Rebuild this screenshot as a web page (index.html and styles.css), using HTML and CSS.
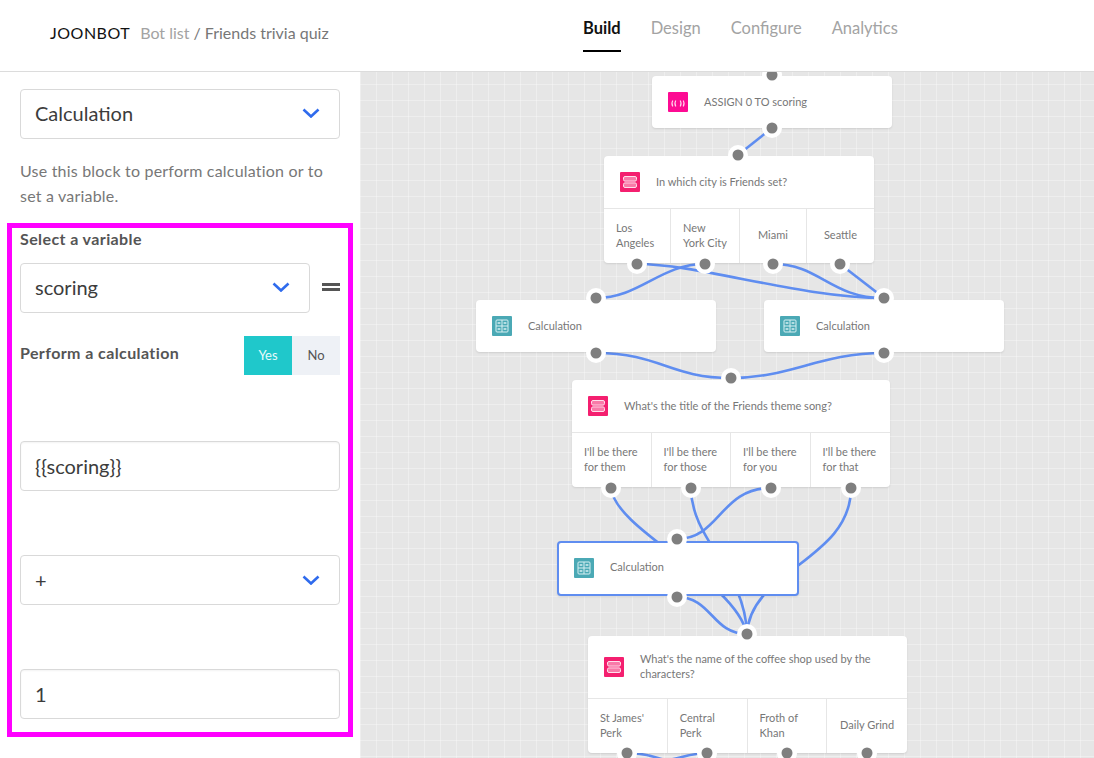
FILE: index.html
```html
<!DOCTYPE html>
<html>
  <head>
    <title>Friends trivia quiz</title>
    <link rel="stylesheet" href="styles.css">
  </head>

  <body>
    <svg class="defs" width="0" height="0">
      <symbol id="chevron" viewBox="0 0 18 10">
        <path d="M1.5 1.5 L9 8.5 L16.5 1.5" fill="none" stroke="#2f6bed" stroke-width="2.6"/>
      </symbol>
      <symbol id="icon-assign" viewBox="0 0 20 20">
        <rect width="20" height="20" rx="1" fill="#fd0b93"/>
        <path d="M4.8 8.5 Q3 11.5 4.8 14.5 M7.8 8.5 Q6 11.5 7.8 14.5 M12.2 8.5 Q14 11.5 12.2 14.5 M15.2 8.5 Q17 11.5 15.2 14.5" fill="none" stroke="#ffd4ec" stroke-width="1.1"/>
      </symbol>
      <symbol id="icon-question" viewBox="0 0 20 20">
        <rect width="20" height="20" rx="1" fill="#f41f6f"/>
        <rect x="3.5" y="4.5" width="13" height="4.6" rx="1.5" fill="#f87aa8" stroke="#ffe0ec"/>
        <rect x="3.5" y="10.9" width="13" height="4.6" rx="1.5" fill="#f87aa8" stroke="#ffe0ec"/>
      </symbol>
      <symbol id="icon-calc" viewBox="0 0 20 20">
        <rect width="20" height="20" rx="1" fill="#4ba9b5"/>
        <rect x="4" y="4" width="12" height="12" rx="1" fill="none" stroke="#d8f0f2"/>
        <path d="M10 4 V16 M4 10 H16" stroke="#d8f0f2"/>
        <path d="M5.6 7 H8.4 M11.6 7 H14.4 M5.6 13 H8.4 M11.6 13 H14.4" stroke="#d8f0f2" stroke-width="1.6"/>
      </symbol>
    </svg>

    <div class="header">
      <div class="brand">
        <span class="logo">JOONBOT</span>
        <span class="crumb-link">Bot list</span>
        <span class="crumb">/ Friends trivia quiz</span>
      </div>
      <div class="tabs">
        <div class="tab active">Build</div>
        <div class="tab">Design</div>
        <div class="tab">Configure</div>
        <div class="tab">Analytics</div>
      </div>
    </div>

    <div class="main">
      <div class="panel">
        <div class="field select">
          <span>Calculation</span>
          <svg class="chevron"><use href="#chevron"/></svg>
        </div>
        <p class="help">Use this block to perform calculation or to set a variable.</p>

        <div class="group">
          <div class="label">Select a variable</div>
          <div class="variable-row">
            <div class="field select">
              <span>scoring</span>
              <svg class="chevron"><use href="#chevron"/></svg>
            </div>
            <div class="equals"></div>
          </div>
          <div class="perform-row">
            <div class="label">Perform a calculation</div>
            <div class="toggle">
              <div class="toggle-on">Yes</div>
              <div class="toggle-off">No</div>
            </div>
          </div>
          <div class="field input operand">{{scoring}}</div>
          <div class="field select operand">
            <span>+</span>
            <svg class="chevron"><use href="#chevron"/></svg>
          </div>
          <div class="field input operand">1</div>
        </div>
      </div>

      <div class="canvas">
        <!-- links are in canvas coordinates, they run under the blocks -->
        <svg class="links" width="734" height="686">
          <g fill="none" stroke="#5f8df0" stroke-width="2.6">
            <path d="M412 56 L378 83"/>
            <path d="M277 192 C340 192 440 226 524 226"/>
            <path d="M345 192 C300 192 280 226 236 226"/>
            <path d="M413 192 C460 192 470 226 524 226"/>
            <path d="M480 192 L524 226"/>
            <path d="M236 281 C300 281 310 306 371 306"/>
            <path d="M524 281 C460 281 430 306 371 306"/>
            <path d="M251 416 C255 458 375 508 387 562"/>
            <path d="M331 416 C331 468 385 498 387 562"/>
            <path d="M411 416 C360 416 360 467 317 467"/>
            <path d="M491 416 C491 488 390 498 387 562"/>
            <path d="M317 525 C352 525 352 562 387 562"/>
            <path d="M267 681 C290 681 300 688 307 688 C315 688 330 681 347 681"/>
          </g>
        </svg>

        <div class="node n-assign">
          <div class="node-head">
            <svg class="node-icon"><use href="#icon-assign"/></svg>
            <div>ASSIGN 0 TO scoring</div>
          </div>
        </div>

        <div class="node n-city">
          <div class="node-head">
            <svg class="node-icon"><use href="#icon-question"/></svg>
            <div>In which city is Friends set?</div>
          </div>
          <div class="options">
            <div class="option">Los<br>Angeles</div>
            <div class="option">New<br>York City</div>
            <div class="option mid">Miami</div>
            <div class="option mid">Seattle</div>
          </div>
        </div>

        <div class="node n-calc-left">
          <div class="node-head">
            <svg class="node-icon"><use href="#icon-calc"/></svg>
            <div>Calculation</div>
          </div>
        </div>

        <div class="node n-calc-right">
          <div class="node-head">
            <svg class="node-icon"><use href="#icon-calc"/></svg>
            <div>Calculation</div>
          </div>
        </div>

        <div class="node n-theme">
          <div class="node-head">
            <svg class="node-icon"><use href="#icon-question"/></svg>
            <div>What's the title of the Friends theme song?</div>
          </div>
          <div class="options">
            <div class="option">I'll be there<br>for them</div>
            <div class="option">I'll be there<br>for those</div>
            <div class="option">I'll be there<br>for you</div>
            <div class="option">I'll be there<br>for that</div>
          </div>
        </div>

        <div class="node n-selected">
          <div class="node-head">
            <svg class="node-icon"><use href="#icon-calc"/></svg>
            <div>Calculation</div>
          </div>
        </div>

        <div class="node n-coffee">
          <div class="node-head">
            <svg class="node-icon"><use href="#icon-question"/></svg>
            <div>What's the name of the coffee shop used by the<br>characters?</div>
          </div>
          <div class="options">
            <div class="option">St James'<br>Perk</div>
            <div class="option">Central<br>Perk</div>
            <div class="option">Froth of<br>Khan</div>
            <div class="option mid">Daily Grind</div>
          </div>
        </div>

        <svg class="ports" width="734" height="686">
          <defs>
            <g id="port">
              <circle r="10" fill="#fff"/>
              <circle r="5.5" fill="#7f7f7f"/>
            </g>
          </defs>
          <use href="#port" x="412" y="3"/>
          <use href="#port" x="412" y="56"/>
          <use href="#port" x="378" y="83"/>
          <use href="#port" x="277" y="192"/>
          <use href="#port" x="345" y="192"/>
          <use href="#port" x="413" y="192"/>
          <use href="#port" x="480" y="192"/>
          <use href="#port" x="236" y="226"/>
          <use href="#port" x="524" y="226"/>
          <use href="#port" x="236" y="281"/>
          <use href="#port" x="524" y="281"/>
          <use href="#port" x="371" y="306"/>
          <use href="#port" x="251" y="416"/>
          <use href="#port" x="331" y="416"/>
          <use href="#port" x="411" y="416"/>
          <use href="#port" x="491" y="416"/>
          <use href="#port" x="317" y="467"/>
          <use href="#port" x="317" y="525"/>
          <use href="#port" x="387" y="562"/>
          <use href="#port" x="267" y="681"/>
          <use href="#port" x="347" y="681"/>
          <use href="#port" x="427" y="681"/>
          <use href="#port" x="507" y="681"/>
        </svg>
      </div>
    </div>
  </body>
</html>
```

FILE: styles.css
```css
* {
  box-sizing: border-box;
  margin: 0;
  padding: 0;
}

html, body {
  height: 100%;
  overflow: hidden;
}

body {
  background: #fff;
  color: #333;
  font-family: "Lato", "Liberation Sans", sans-serif;
  display: flex;
  flex-direction: column;
}

.defs {
  position: absolute;
}

/* Top bar */
.header {
  display: flex;
  align-items: center;
  height: 72px;
  flex-shrink: 0;
  border-bottom: 1px solid #dcdcdc;
}

.brand {
  display: flex;
  width: 583px;
  padding: 0 0 6px 50px;
  font-size: 16px;
}

.logo {
  color: #111;
  letter-spacing: 0.5px;
  margin-right: 10px;
}

.crumb-link {
  color: #a3a3a3;
  margin-right: 4px;
}

.crumb {
  color: #777;
}

.tabs {
  display: flex;
  gap: 30px;
  align-self: stretch;
}

.tab {
  font-size: 16.5px;
  color: #a3a3a3;
  padding-top: 18px;
}

.tab.active {
  color: #111;
  font-weight: 700;
  height: 52px;
  border-bottom: 2px solid #000;
}

.main {
  display: flex;
  flex: 1;
  min-height: 0;
}

/* Left panel */
.panel {
  width: 360px;
  flex-shrink: 0;
  padding: 17px 20px 0;
}

.field {
  display: flex;
  align-items: center;
  height: 50px;
  padding: 0 15px 2px 14px;
  border: 1px solid #d9d9d9;
  border-radius: 4px;
  background: #fff;
  font-size: 20px;
  color: #3c3c3c;
}

.select {
  justify-content: space-between;
}

.input {
  box-shadow: inset 0 1px 2px rgba(0, 0, 0, 0.05);
}

.chevron {
  width: 18px;
  height: 10px;
  margin-right: 4px;
}

.help {
  margin-top: 19px;
  font-size: 16px;
  letter-spacing: 0.2px;
  line-height: 25px;
  color: #777;
}

.group {
  margin: 15px -13px 0;
  padding: 0 8px 13px;
  border: 5px solid #f0f;
}

.label {
  font-size: 16px;
  letter-spacing: 0.4px;
  font-weight: 700;
  line-height: 22px;
  color: #555;
}

.variable-row {
  display: flex;
  align-items: center;
  gap: 12px;
  margin-top: 13px;
}

.variable-row .field {
  flex: 1;
}

.equals {
  width: 18px;
  height: 8px;
  border-top: 3px solid #555;
  border-bottom: 3px solid #555;
  margin-top: -2px;
}

.perform-row {
  display: flex;
  justify-content: space-between;
  align-items: center;
  margin-top: 23px;
}

.perform-row .label {
  margin-top: -5px;
}

.toggle {
  display: flex;
  height: 39px;
  font-size: 13px;
  line-height: 38px;
  text-align: center;
}

.toggle-on {
  width: 48px;
  background: #1fc8cb;
  color: #e8fbfb;
}

.toggle-off {
  width: 48px;
  background: #eef1f6;
  color: #555;
}

.operand {
  margin-top: 64px;
  padding-bottom: 0;
}

.perform-row + .operand {
  margin-top: 66px;
}

/* Canvas */
.canvas {
  position: relative;
  flex: 1;
  overflow: hidden;
  background-color: #e6e6e6;
  background-image:
    linear-gradient(to right, rgba(255, 255, 255, 0.3) 1px, transparent 1px),
    linear-gradient(to bottom, rgba(255, 255, 255, 0.3) 1px, transparent 1px);
  background-size: 16px 16px;
  background-position: 0 12px;
}

.links, .ports {
  position: absolute;
  left: 0;
  top: 0;
}

.node {
  position: absolute;
  display: flex;
  flex-direction: column;
  background: #fff;
  border-radius: 4px;
  box-shadow: 0 1px 2px rgba(0, 0, 0, 0.1);
  font-size: 11px;
  line-height: 15px;
  color: #777;
}

.node-head {
  display: flex;
  align-items: center;
  gap: 16px;
  height: 52px;
  padding: 0 16px;
  flex-shrink: 0;
}

.node-head div {
  margin-top: -2px;
}

.node-icon {
  width: 20px;
  height: 20px;
  flex-shrink: 0;
}

.options {
  display: grid;
  grid-template-columns: repeat(4, 1fr);
  flex: 1;
  border-top: 1px solid #e6e6e6;
}

.option {
  display: flex;
  align-items: center;
  padding: 0 12px 3px;
  border-right: 1px solid #e6e6e6;
  white-space: nowrap;
}

.option:last-child {
  border-right: 0;
}

.option.mid {
  justify-content: center;
}

.n-assign {
  left: 292px;
  top: 4px;
  width: 240px;
  height: 52px;
}

.n-city {
  left: 244px;
  top: 84px;
  width: 270px;
  height: 107px;
}

.n-calc-left {
  left: 116px;
  top: 228px;
  width: 240px;
  height: 52px;
}

.n-calc-right {
  left: 404px;
  top: 228px;
  width: 240px;
  height: 52px;
}

.n-theme {
  left: 212px;
  top: 308px;
  width: 318px;
  height: 107px;
}

.n-selected {
  left: 197px;
  top: 469px;
  width: 242px;
  height: 55px;
  border: 2px solid #5f8df0;
}

.n-selected .node-head {
  height: 49px;
  padding: 0 15px;
}

.n-coffee {
  left: 228px;
  top: 564px;
  width: 319px;
  height: 117px;
}

.n-coffee .node-head {
  height: 62px;
}
```
